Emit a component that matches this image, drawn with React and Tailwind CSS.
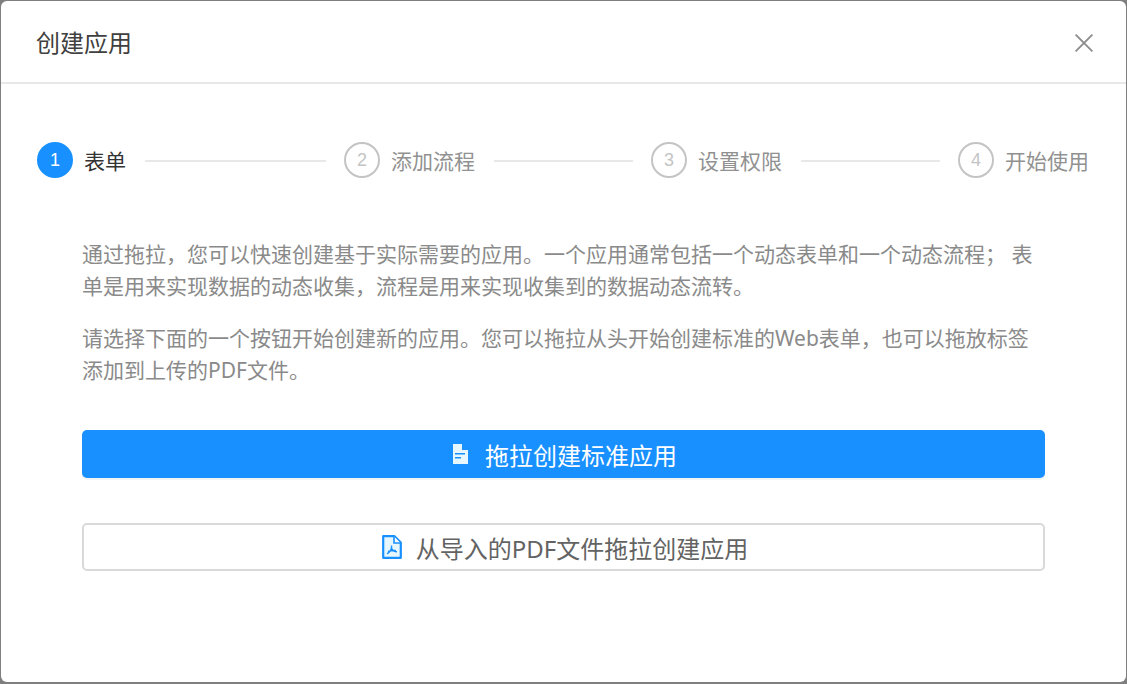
import React from "react";

const font = { fontFamily: '"Noto Sans", "Noto Sans CJK SC", sans-serif' };
const digitFont = { fontFamily: '"Liberation Sans", sans-serif' };

const steps = ["表单", "添加流程", "设置权限", "开始使用"];

const CloseIcon = () => (
  <svg className="mt-[3px]" width="18" height="18" viewBox="0 0 18 18" fill="none" stroke="#8c8c8c" strokeWidth="1.8">
    <path d="M0.6 0.6L17.4 17.4M17.4 0.6L0.6 17.4" />
  </svg>
);

const FileIcon = () => (
  <svg width="15" height="20" viewBox="0 0 15 20">
    <path d="M0 0H9V6H15V20H0Z" fill="#e6f7ff" />
    <path d="M9.6 0L15 5.4H9.6Z" fill="#1890ff" />
    <path d="M2 9H12V10.6H2ZM2 13H8V14.6H2Z" fill="#1890ff" />
  </svg>
);

const PdfIcon = () => (
  <svg width="20" height="24" viewBox="0 0 20 24">
    <path d="M1.2 1.2H12.5L18.8 7.5V22.8H1.2Z" fill="#e6f7ff" stroke="#1890ff" strokeWidth="2.2" strokeLinejoin="round" />
    <path d="M12 1.5V8H18.5" fill="#ffffff" stroke="#1890ff" strokeWidth="1.6" />
    <path d="M9.6 10.5C9.8 13.5 8 17 5 18.8M9.8 13.5C10.5 15.5 12.5 16.8 15 16.8M6 16.5C8.5 15.6 11 15.4 14 15.6" fill="none" stroke="#1890ff" strokeWidth="1.4" />
  </svg>
);

const Step = ({ index, title, last }) => {
  const active = index === 0;
  return (
    <div className={`flex items-center ${last ? "flex-none" : "flex-1 pr-[18px]"}`}>
      <div
        className={`flex h-9 w-9 flex-none items-center justify-center rounded-full text-[18px] ${
          active ? "bg-[#1890ff] text-white" : "border-2 border-[#c4c4c4] text-[#c4c4c4]"
        }`}
        style={digitFont}
      >
        {index + 1}
      </div>
      <span className={`ml-[11px] pt-[2px] text-[21px] leading-[32px] ${active ? "text-[#333333]" : "text-[#919191]"}`}>
        {title}
      </span>
      {!last && <div className="ml-[19px] mt-[2px] h-[2px] flex-1 bg-[#e8e8e8]" />}
    </div>
  );
};

export default function App() {
  return (
    <div className="h-[684px] w-[1127px] overflow-hidden bg-[#7f7f7f] pb-[2px] pl-[1px] pr-[1px] pt-[1px]" style={font}>
      <div className="flex h-full flex-col rounded-[6px] bg-white">
        <div className="flex h-[83px] flex-none items-center justify-between border-b-2 border-[#e8e8e8] pl-[35px] pr-[33px]">
          <span className="pt-[2px] text-[24px] text-[#404040]">创建应用</span>
          <CloseIcon />
        </div>

        <div className="mt-[58px] flex pl-[36px] pr-[37px]">
          {steps.map((s, i) => (
            <Step key={s} index={i} title={s} last={i === steps.length - 1} />
          ))}
        </div>

        <div className="mt-[60px] px-[81px] text-[21px] leading-[32px] text-[#8a8a8a]">
          <p>
            通过拖拉，您可以快速创建基于实际需要的应用。一个应用通常包括一个动态表单和一个动态流程；&nbsp;表单是用来实现数据的动态收集，流程是用来实现收集到的数据动态流转。
          </p>
          <p className="mt-[20px]">
            请选择下面的一个按钮开始创建新的应用。您可以拖拉从头开始创建标准的Web表单，也可以拖放标签添加到上传的PDF文件。
          </p>
        </div>

        <div className="mt-[44px] flex flex-col gap-[45px] px-[81px]">
          <button className="flex h-[48px] items-center justify-center gap-[17px] rounded-[5px] bg-[#1890ff] pl-[3px] text-[24px] text-white shadow-[0_2px_0_rgba(0,0,0,0.045)]">
            <FileIcon />
            <span className="pt-[3px]">拖拉创建标准应用</span>
          </button>
          <button className="flex h-[48px] items-center justify-center gap-[14px] rounded-[5px] border-2 border-[#d9d9d9] bg-white pl-[3px] text-[24px] text-[#636363]">
            <PdfIcon />
            <span className="pt-[3px]">从导入的PDF文件拖拉创建应用</span>
          </button>
        </div>
      </div>
    </div>
  );
}
